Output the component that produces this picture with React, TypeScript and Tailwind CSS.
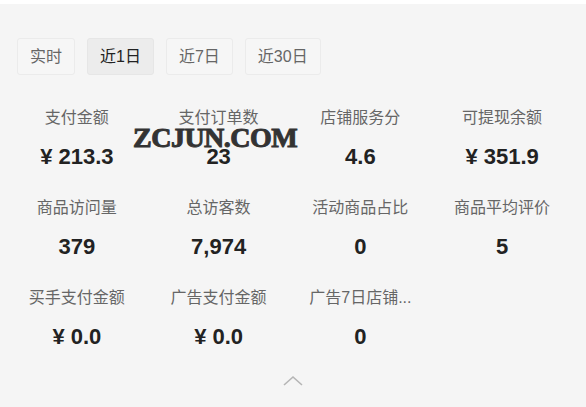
import React from "react";

const tabs = [
  { t: "实时", active: false },
  { t: "近1日", active: true },
  { t: "近7日", active: false },
  { t: "近30日", active: false },
];

const stats = [
  { l: "支付金额", v: "¥ 213.3" },
  { l: "支付订单数", v: "23" },
  { l: "店铺服务分", v: "4.6" },
  { l: "可提现余额", v: "¥ 351.9" },
  { l: "商品访问量", v: "379" },
  { l: "总访客数", v: "7,974" },
  { l: "活动商品占比", v: "0" },
  { l: "商品平均评价", v: "5" },
  { l: "买手支付金额", v: "¥ 0.0" },
  { l: "广告支付金额", v: "¥ 0.0" },
  { l: "广告7日店铺...", v: "0" },
];

export default function App() {
  return (
    <div
      className="relative w-[586px] h-[407px] overflow-hidden bg-[#f5f5f5]"
      style={{ fontFamily: '"Liberation Sans", "Noto Sans CJK SC", sans-serif' }}
    >
      <div className="h-[4px] bg-white" />
      <div className="flex gap-3 pl-[17px] pt-[34px]">
        {tabs.map((x) => (
          <div
            key={x.t}
            className={
              "h-[37px] px-3 flex items-center rounded-[3px] border text-[16px] " +
              (x.active
                ? "bg-[#ececec] border-[#e6e6e6] text-[#222]"
                : "bg-[#f6f6f6] border-[#ebebeb] text-[#666]")
            }
          >
            {x.t}
          </div>
        ))}
      </div>
      <div className="grid grid-cols-4 w-[567px] ml-[6px] pt-[31px] gap-y-[25px]">
        {stats.map((s) => (
          <div key={s.l} className="flex flex-col items-center">
            <div className="h-[24px] leading-[24px] text-[16px] text-[#666]">{s.l}</div>
            <div className="mt-[13px] h-[28px] leading-[28px] text-[22px] font-bold text-[#222]">
              {s.v}
            </div>
          </div>
        ))}
      </div>
      <div className="flex justify-center pt-[24px]">
        <svg width="20" height="11" viewBox="0 0 20 11" fill="none">
          <path d="M1 10 L10 2 L19 10" stroke="#b5b5b5" strokeWidth="1.6" />
        </svg>
      </div>
      <div
        className="absolute left-[133px] top-[124px] text-[28px] leading-none font-bold text-[#333] tracking-[-0.5px] [-webkit-text-stroke:1px_#333]"
        style={{ fontFamily: '"Liberation Serif", serif' }}
      >
        ZCJUN.COM
      </div>
    </div>
  );
}
